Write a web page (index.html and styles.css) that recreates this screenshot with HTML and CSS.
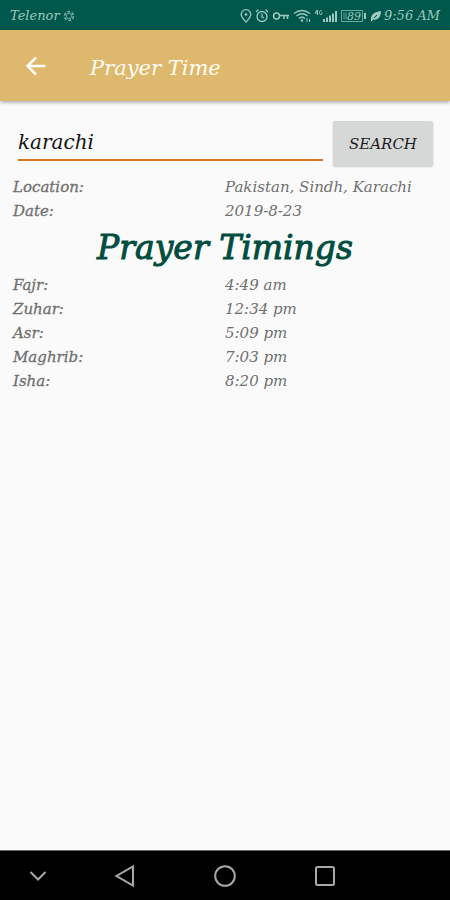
FILE: index.html
```html
<!DOCTYPE html>
<html lang="en">
<head>
<meta charset="utf-8">
<meta name="viewport" content="width=device-width, initial-scale=1">
<title>Prayer Time</title>
<link rel="stylesheet" href="styles.css">
</head>
<body>
<div class="status">
  <span>Telenor</span>
  <svg class="gear" width="12" height="14" viewBox="0 0 12 14" fill="none" stroke="currentColor"><circle cx="6" cy="7" r="4.4" stroke-width="1.8" stroke-dasharray="3 1.6"/><circle cx="6" cy="7" r="2.6"/></svg>
  <div class="status-icons">
    <svg width="12" height="16" viewBox="0 0 12 16" fill="none" stroke="currentColor" stroke-width="1.3"><path d="M6 14C3 10.500 1.200 9 1.200 6.500a4.800 4.800 0 0 1 9.600 0C10.800 9 9 10.500 6 14z"/><circle cx="6" cy="6.500" r="1.300" fill="currentColor" stroke="none"/></svg>
    <svg width="14" height="16" viewBox="0 0 14 16" fill="none" stroke="currentColor" stroke-width="1.300"><circle cx="7" cy="8.500" r="5"/><path d="M7 5.500V9l2 1M1 4l2.500-2.500M13 4l-2.500-2.500"/></svg>
    <svg width="18" height="16" viewBox="0 0 18 16" fill="none" stroke="currentColor" stroke-width="1.500"><circle cx="4.500" cy="8" r="3"/><path d="M7.500 7.500H17M12 7.500V11M15.500 7.500V11"/></svg>
    <svg width="18" height="16" viewBox="0 0 18 16" fill="none" stroke="currentColor" stroke-width="1.500"><path d="M1 5.500Q9-.5 17 5.500M3.500 8Q9 3.500 14.500 8M6 10.500Q9 8 12 10.500"/><circle cx="9" cy="12.500" r="1.200" fill="currentColor" stroke="none"/><path d="M14 10v4M16.500 11v3" stroke-width="1"/></svg>
    <svg width="24" height="16" viewBox="0 0 24 16" fill="none" stroke="currentColor"><path d="M3 2L1 5h3M3.500 2v5M8 3Q5.500 1.500 5.500 4.500T8 6V4.500" stroke-width="1"/><path d="M10 14v-3M13 14V9.500M16 14V7.500M19 14V5.500M22 14V3" stroke-width="2"/></svg>
    <svg width="26" height="16" viewBox="0 0 26 16" fill="none" stroke="currentColor"><path d="M.5 2.500h21v11H.5z" opacity=".7"/><path d="M3 4.500v7M5 4.500v7" opacity=".6"/><path d="M24 5v6" stroke-width="2"/><text class="charge" x="6" y="12" fill="currentColor" stroke="none">89</text></svg>
    <svg width="12" height="16" viewBox="0 0 12 16"><path d="M1 13C.5 7 3 4 11 3c0 6-3 9.500-8 8.500L2 13.500z" fill="currentColor"/><path d="M4 10l3-3" stroke="#00574b"/></svg>
  </div>
  <span>9:56 AM</span>
</div>
<header class="appbar">
  <button class="back" type="button" aria-label="Back"><svg width="22" height="22" viewBox="0 0 22 22" fill="none" stroke="currentColor" stroke-width="2.500"><path d="M20.500 11H3M11 2.500L2.500 11l8.500 8.500"/></svg></button>
  <h1 class="title">Prayer Time</h1>
</header>
<main class="content">
  <form class="search">
    <input class="city" type="text" value="karachi" aria-label="City">
    <button class="submit" type="button">SEARCH</button>
  </form>
  <dl class="rows">
    <dt>Location:</dt><dd>Pakistan, Sindh, Karachi</dd>
    <dt>Date:</dt><dd>2019-8-23</dd>
  </dl>
  <h2 class="heading">Prayer Timings</h2>
  <dl class="rows">
    <dt>Fajr:</dt><dd>4:49 am</dd>
    <dt>Zuhar:</dt><dd>12:34 pm</dd>
    <dt>Asr:</dt><dd>5:09 pm</dd>
    <dt>Maghrib:</dt><dd>7:03 pm</dd>
    <dt>Isha:</dt><dd>8:20 pm</dd>
  </dl>
</main>
<nav class="navbar">
  <button type="button" aria-label="Hide"><svg width="24" height="24" viewBox="0 0 24 24"><path d="M4.500 8l7.500 7.500L19.500 8"/></svg></button>
  <button type="button" aria-label="Back"><svg width="24" height="24" viewBox="0 0 24 24"><path d="M20 2.500v19L3.500 12z"/></svg></button>
  <button type="button" aria-label="Home"><svg width="24" height="24" viewBox="0 0 24 24"><circle cx="12" cy="12" r="9.800"/></svg></button>
  <button type="button" aria-label="Recent apps"><svg width="24" height="24" viewBox="0 0 24 24"><rect x="3" y="3" width="18" height="18" rx="1.500"/></svg></button>
</nav>
</body>
</html>
```
FILE: styles.css
```css
* {
  box-sizing: border-box;
}

body {
  margin: 0;
  min-height: 100vh;
  display: flex;
  flex-direction: column;
  background: #fafafa;
  color: #707070;
  font-family: "DejaVu Serif", serif;
  font-style: italic;
  font-size: 15px;
  line-height: 24px;
}

button,
input {
  font: inherit;
  border: 0;
  padding: 0;
  background: none;
}

svg {
  display: block;
}

.status {
  display: flex;
  align-items: center;
  height: 30px;
  padding: 2px 10px 0;
  background: #00574b;
  color: #9cc8bf;
  font-size: 13px;
}

.gear {
  margin-left: 3px;
  opacity: 0.7;
}

.status-icons {
  display: flex;
  gap: 3px;
  margin-left: auto;
  margin-right: 2px;
}

.charge {
  font-size: 11px;
}

.appbar {
  display: flex;
  align-items: center;
  height: 71px;
  padding-left: 25px;
  background: #deb86c;
  color: #fffdf5;
  box-shadow: 0 1px 4px rgba(0, 0, 0, 0.4);
}

.back {
  color: inherit;
}

.title {
  margin: 4px 0 0 43px;
  font-size: 21px;
  font-weight: normal;
}

.content {
  flex: 1;
  padding: 20px 13px;
}

.search {
  display: flex;
  align-items: flex-start;
  gap: 10px;
  padding: 0 4px 0 5px;
  margin-bottom: 9px;
}

.city {
  flex: 1;
  min-width: 0;
  height: 40px;
  padding-top: 4px;
  border-bottom: 2px solid #d9761c;
  border-radius: 0;
  color: #151515;
  font-size: 20px;
  outline: 0;
}

.submit {
  width: 100px;
  height: 45px;
  border-radius: 2px;
  background: #d6d8d7;
  color: #1c1c1c;
  box-shadow: 0 1px 2px rgba(0, 0, 0, 0.2);
}

.rows {
  display: grid;
  grid-template-columns: 1fr 1fr;
  margin: 0;
}

.rows dt {
  -webkit-text-stroke: 0.3px;
}

.rows dd {
  margin: 0;
}

.heading {
  margin: 0;
  text-align: center;
  color: #004d40;
  font-size: 33px;
  line-height: 50px;
  font-weight: normal;
  -webkit-text-stroke: 1px;
}

.navbar {
  display: grid;
  grid-template-columns: 3fr 4fr 4fr 4fr 3fr;
  place-items: center;
  height: 50px;
  border-top: 1px solid #666;
  background: #000;
}

.navbar svg {
  fill: none;
  stroke: #a8a8a8;
  stroke-width: 2;
}
```
